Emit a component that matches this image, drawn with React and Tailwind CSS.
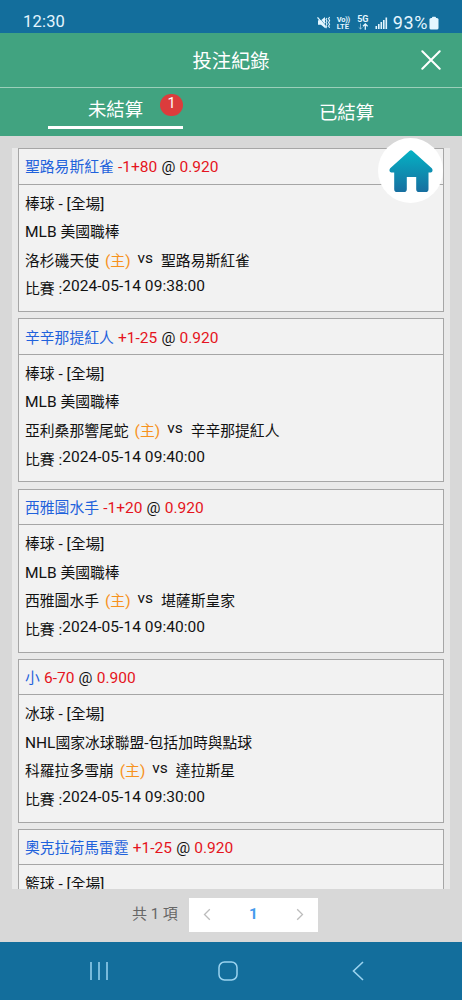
import React from 'react'

const bets = [
  { pick: '聖路易斯紅雀', odds: '-1+80', rate: '0.920', sport: '棒球', league: 'MLB 美國職棒', home: '洛杉磯天使', away: '聖路易斯紅雀', time: '2024-05-14 09:38:00' },
  { pick: '辛辛那提紅人', odds: '+1-25', rate: '0.920', sport: '棒球', league: 'MLB 美國職棒', home: '亞利桑那響尾蛇', away: '辛辛那提紅人', time: '2024-05-14 09:40:00' },
  { pick: '西雅圖水手', odds: '-1+20', rate: '0.920', sport: '棒球', league: 'MLB 美國職棒', home: '西雅圖水手', away: '堪薩斯皇家', time: '2024-05-14 09:40:00' },
  { pick: '小', odds: '6-70', rate: '0.900', sport: '冰球', league: 'NHL國家冰球聯盟-包括加時與點球', home: '科羅拉多雪崩', away: '達拉斯星', time: '2024-05-14 09:30:00' },
  { pick: '奧克拉荷馬雷霆', odds: '+1-25', rate: '0.920', sport: '籃球' },
]

// Chinese runs are set a little smaller than the latin ones
function Text({ children }) {
  return children.split(/([\u4e00-\u9fff]+)/).map((part, i) =>
    i % 2 === 1 ? (
      <span key={i} className="text-[14.8px]">{part}</span>
    ) : (
      part
    )
  )
}

function StatusBar() {
  return (
    <div className="flex h-[33px] shrink-0 items-center justify-between bg-[#136e9c] pt-[12px] pr-[22px] pl-[23px] text-[#e4f6ff]">
      <span className="text-[16.5px] leading-none tracking-[0.2px]">12:30</span>
      <div className="flex items-center">
        <svg className="h-[13px] w-[14px]" viewBox="0 0 14 13" fill="none" stroke="currentColor">
          <path d="M1 4.3h3L8 1v11L4 8.7H1z" fill="currentColor" stroke="none" />
          <path d="M1.6 0.8l9 11" stroke="#136e9c" strokeWidth="0.6" />
          <path d="M0.5 1.3l9 10.8" strokeWidth="1.3" />
          <path d="M10 2l-1 1.5 1 1.5-1 1.5 1 1.5-1 1.5 1 1.5M12.6 1l-1 1.8 1 1.8-1 1.8 1 1.8-1 1.8 1 1.8" strokeWidth="1.1" />
        </svg>
        <span className="ml-[6px] flex w-[14px] flex-col text-[7.5px] leading-[7px] font-bold">
          <span className="tracking-[-0.3px]">Vo))</span>
          <span>LTE</span>
        </span>
        <span className="ml-[6px] flex w-[12px] flex-col items-center text-[9px] leading-[7px] font-bold">
          5G
          <svg className="h-[7px] w-[10px]" viewBox="0 0 10 7" fill="none" stroke="currentColor">
            <path d="M2.5 0.5v5.5M0.7 4.3l1.8 1.8 1.8-1.8" strokeWidth="0.8" opacity="0.7" />
            <path d="M7.3 6.8V1M5 3.3L7.3 1l2.3 2.3" strokeWidth="1.3" />
          </svg>
        </span>
        <svg className="ml-[6px] h-[12px] w-[13px]" viewBox="0 0 13 12" fill="currentColor">
          <path d="M0.5 9h1.6v3H0.5zM3 7h1.6v5H3zM5.5 5h1.6v7H5.5zM8 3h1.6v9H8zM10.5 0.5h1.6V12h-1.6z" />
        </svg>
        <span className="ml-[5px] text-[18px] leading-none tracking-[0.6px]">93%</span>
        <svg className="mr-[1px] ml-[1px] h-[14px] w-[10px]" viewBox="0 0 10 14" fill="currentColor">
          <rect x="3" y="0.8" width="4" height="3" rx="0.8" />
          <rect x="0.5" y="2" width="9" height="11.5" rx="1.6" />
        </svg>
      </div>
    </div>
  )
}

function Header() {
  return (
    <header className="shrink-0 bg-[#41a380] text-white">
      <div className="relative flex h-[54px] items-center justify-center pt-[4px]">
        <h1 className="text-[19.3px] leading-none">投注紀錄</h1>
        <button aria-label="close" className="absolute top-[17px] right-[21px]">
          <svg className="h-[20px] w-[20px]" viewBox="0 0 20 20" fill="none" stroke="currentColor" strokeWidth="2" strokeLinecap="round">
            <path d="M1.3 1.3l17.4 17.4M18.7 1.3L1.3 18.7" />
          </svg>
        </button>
      </div>
      <div className="flex h-[48.5px] border-t border-[#9bcfba] text-[18.4px] leading-none">
        <div className="flex w-1/2 flex-col items-center pt-[13px]">
          <div className="relative flex h-[28px] w-[135px] justify-center border-b-[3.5px] border-white">
            <span>未結算</span>
            <span className="absolute top-[-7px] right-0 flex h-[22px] w-[23px] items-center justify-center rounded-full bg-[#dc3c3c] pb-[1px] text-[14.5px]">1</span>
          </div>
        </div>
        <div className="flex w-1/2 justify-center pt-[16px]">已結算</div>
      </div>
    </header>
  )
}

function BetCard({ bet }) {
  return (
    <article className="mb-[6.2px] h-[164px] shrink-0 border border-[#a6a6a6] bg-[#f2f2f2] text-[15.5px] whitespace-nowrap text-[#111]">
      <div className="flex h-[35.5px] items-center gap-[4.2px] border-b border-[#a6a6a6] px-[6px] pt-[3px]">
        <span className="text-[#1f62dc]"><Text>{bet.pick}</Text></span>
        <span className="text-[#e51420]">{bet.odds}</span>
        <span>@</span>
        <span className="text-[#e51420]">{bet.rate}</span>
      </div>
      <div className="px-[6px] pt-[5px] leading-[28.6px]">
        <p className="h-[28.6px]"><Text>{`${bet.sport} - [全場]`}</Text></p>
        {bet.league && <p className="h-[28.6px]"><Text>{bet.league}</Text></p>}
        {bet.home && (
          <p className="flex h-[28.6px]">
            <Text>{bet.home}</Text>
            <span className="ml-[6px] text-[#f7931e]"><Text>(主)</Text></span>
            <span className="mt-[-3px] mr-[8px] ml-[7px]">vs</span>
            <Text>{bet.away}</Text>
          </p>
        )}
        {bet.time && (
          <p className="flex h-[28.6px]">
            <span><Text>比賽 :</Text></span>
            <span className="mt-[-3px] tracking-[0.05px]">{bet.time}</span>
          </p>
        )}
      </div>
    </article>
  )
}

function Pager() {
  return (
    <div className="flex h-[53px] shrink-0 items-start pt-[9px] pl-[132px]">
      <span className="w-[57px] text-[15px] leading-[33px] text-[#666]">共 1 項</span>
      <div className="flex h-[34px] w-[129px] items-center justify-between bg-white px-[14px]">
        <svg className="h-[13px] w-[8px]" viewBox="0 0 8 13" fill="none" stroke="#bcbcbc" strokeWidth="1.3">
          <path d="M6.8 1.2L1.5 6.5l5.3 5.3" />
        </svg>
        <span className="text-[15.5px] font-bold text-[#459bed]">1</span>
        <svg className="h-[13px] w-[8px]" viewBox="0 0 8 13" fill="none" stroke="#bcbcbc" strokeWidth="1.3">
          <path d="M1.2 1.2l5.3 5.3-5.3 5.3" />
        </svg>
      </div>
    </div>
  )
}

function NavBar() {
  return (
    <nav className="flex flex-1 items-center bg-[#136e9c] pt-[1px] pl-[89px] text-[#9bd3ef]">
      <svg className="h-[20px] w-[19px]" viewBox="0 0 19 20" stroke="currentColor" strokeWidth="1.5">
        <path d="M2 1v18M10 1v18M18 1v18" />
      </svg>
      <svg className="ml-[110px] h-[20px] w-[20px]" viewBox="0 0 20 20" fill="none" stroke="currentColor" strokeWidth="1.5">
        <rect x="1" y="1" width="18" height="18" rx="5.5" />
      </svg>
      <svg className="ml-[114px] h-[20px] w-[12px]" viewBox="0 0 12 20" fill="none" stroke="currentColor" strokeWidth="1.6">
        <path d="M11 1L1.5 10l9.5 9" />
      </svg>
    </nav>
  )
}

export default function App() {
  return (
    <div className="relative flex h-[1000px] w-[462px] flex-col overflow-hidden bg-[#d8d8d8] font-[Roboto,'Noto_Sans_CJK_TC',sans-serif]">
      <StatusBar />
      <Header />
      <main className="mx-[12px] mt-[12.7px] flex h-[740.7px] shrink-0 flex-col overflow-hidden bg-[#e9e9e9] pr-[6px] pl-[6px]">
        {bets.map((bet) => (
          <BetCard key={bet.pick} bet={bet} />
        ))}
      </main>
      <Pager />
      <NavBar />
      <button aria-label="home" className="absolute top-[138px] left-[378px] flex h-[65px] w-[65px] items-center justify-center rounded-full bg-white">
        <svg className="h-[42px] w-[44px]" viewBox="0 0 44 42">
          <defs>
            <linearGradient id="home" x1="0" y1="0" x2="0" y2="1">
              <stop offset="0" stopColor="#05b2c4" />
              <stop offset="1" stopColor="#176fa0" />
            </linearGradient>
          </defs>
          <path
            d="M20.4 0.9Q22 -0.5 23.6 0.9L42.8 18.3Q44.3 20.2 42.8 21.9Q41.7 22.9 39.5 22.4V39.2Q39.5 42 36.7 42H30Q27.2 42 27.2 39.2V27H17.8V39.2Q17.8 42 15 42H8Q5.2 42 5.2 39.2V22.4Q2.6 22.9 1.2 21.9Q-0.3 20.2 1.2 18.3Z"
            fill="url(#home)"
          />
        </svg>
      </button>
    </div>
  )
}
